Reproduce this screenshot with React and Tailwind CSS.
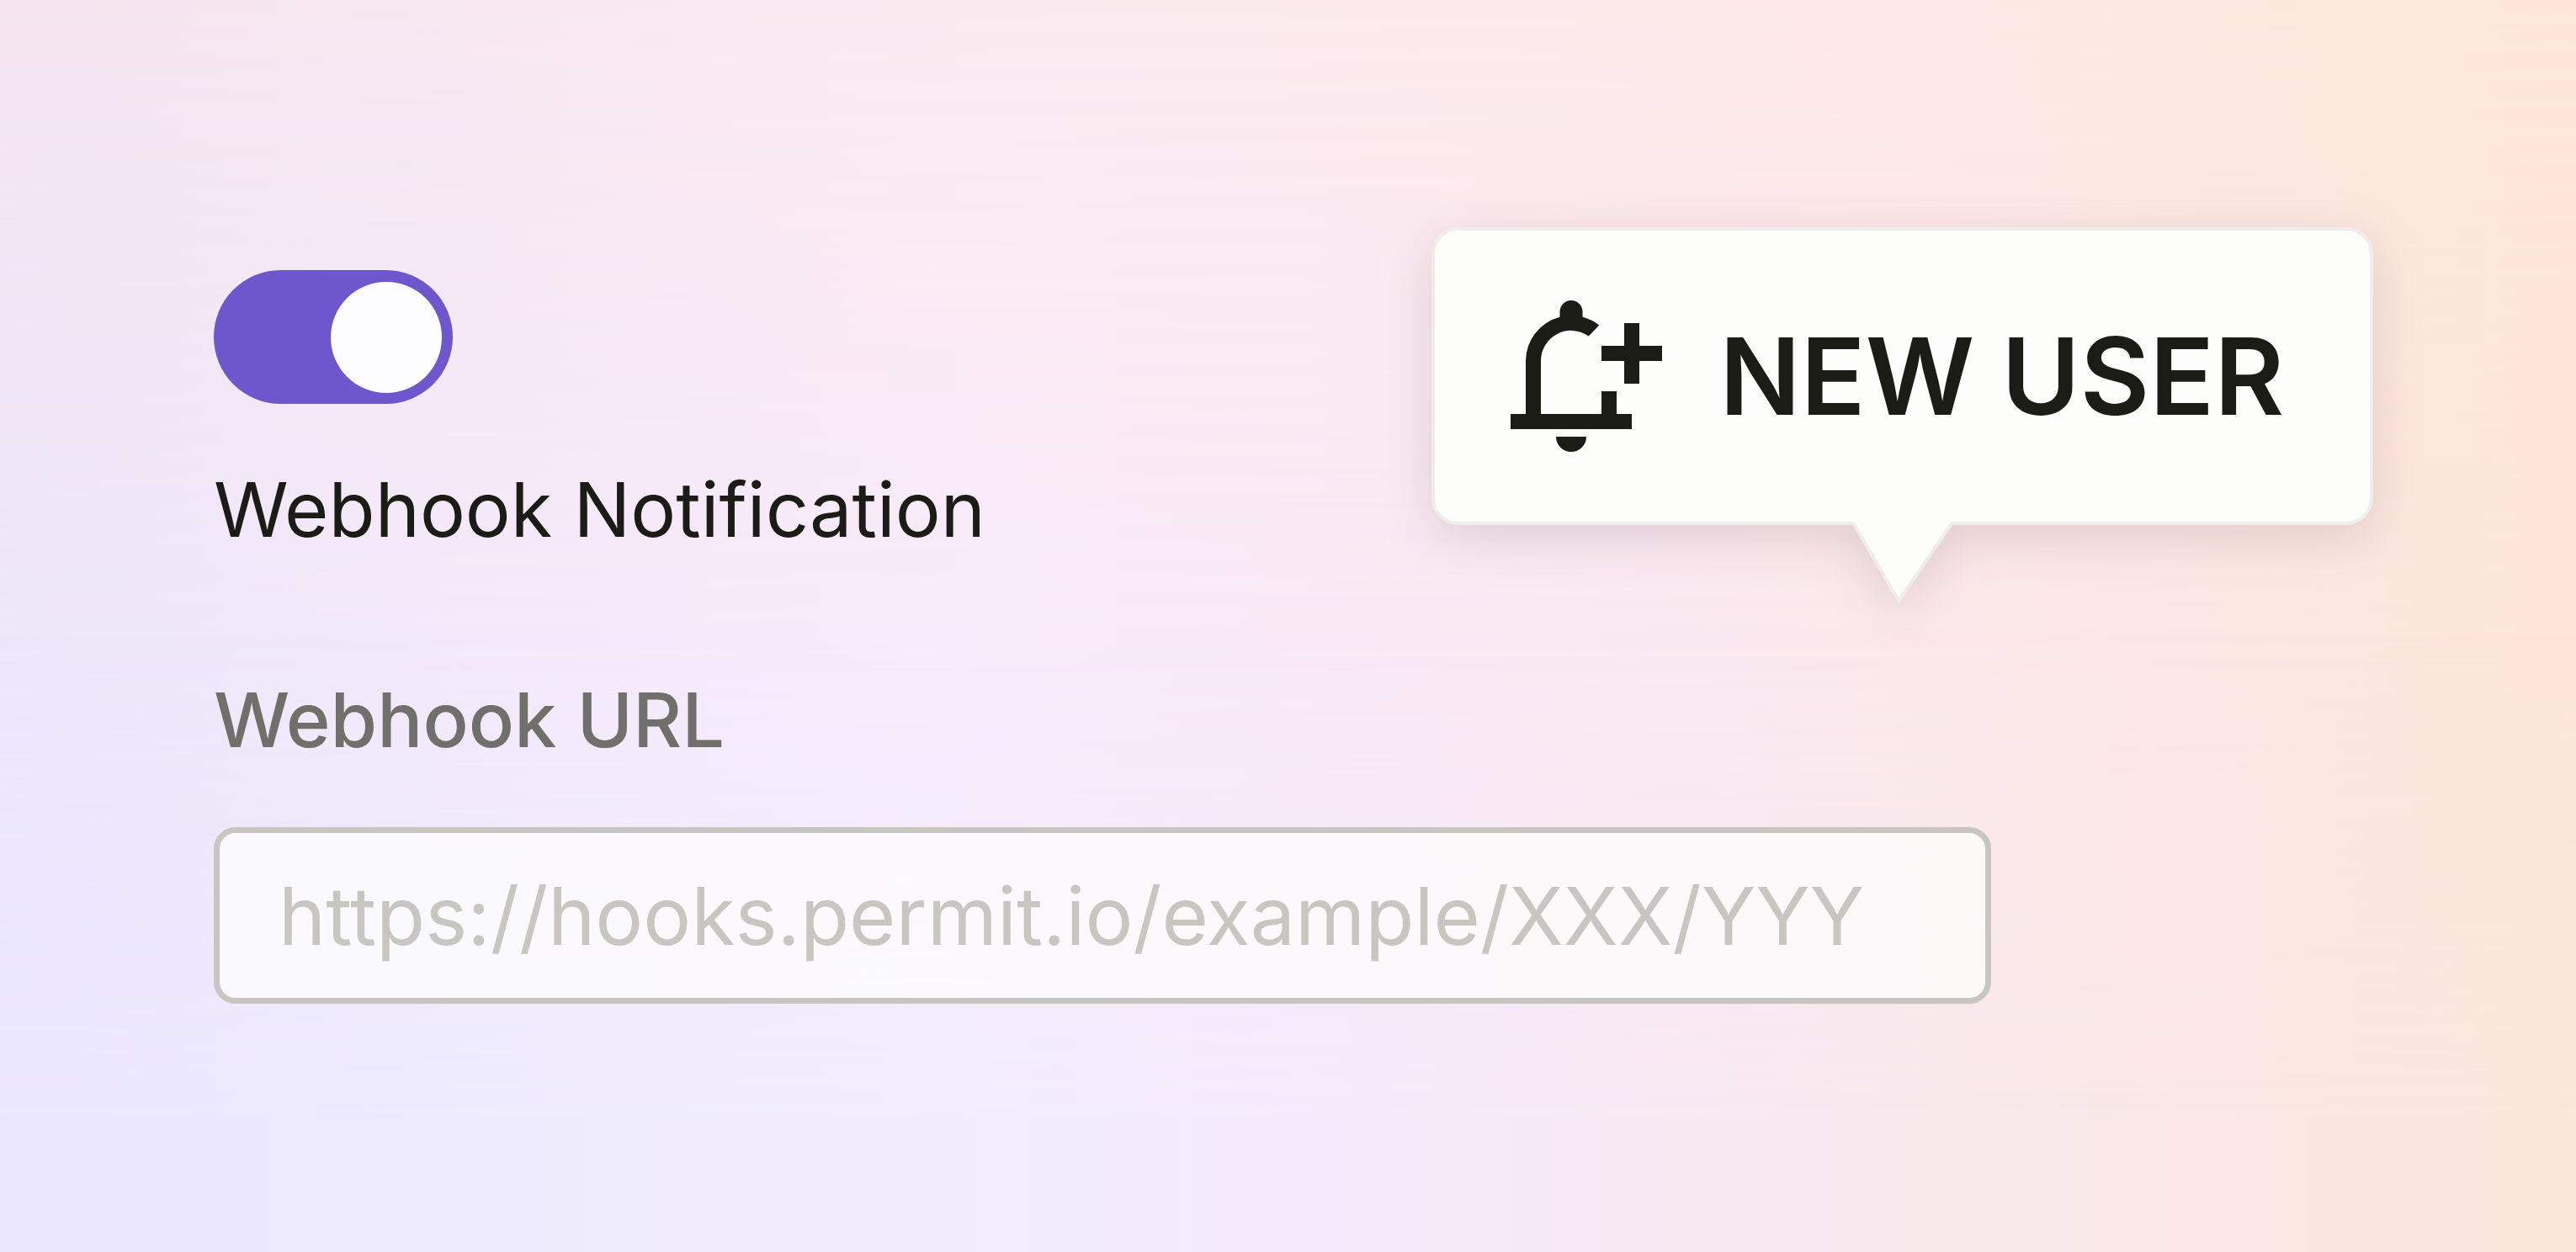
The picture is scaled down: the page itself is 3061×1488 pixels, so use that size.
function Backdrop() {
  return (
    <div aria-hidden="true" className="absolute inset-0 -z-10 bg-[linear-gradient(90deg,#ede7fb_0%,#f4eafb_18%,#f8ecfc_36%,#f9eaf7_52%,#fbe9ee_72%,#fce8e5_86%,#fde7dc_95%,#fee7d9_100%)]">
      <div className="absolute inset-0 bg-[linear-gradient(90deg,#f4e5f0_0%,#f6e8f1_16%,#fbeaf0_36%,#fceaee_52%,#fde9e7_74%,#fee8df_86%,#fee7d9_100%)] [mask-image:linear-gradient(180deg,black_0%,transparent_55%)]" />
      <div className="absolute inset-0 bg-[linear-gradient(90deg,#eae6fd_0%,#eeebfe_18%,#f1edfe_34%,#f6eafb_53%,#f7e9f2_66%,#fae8e8_82%,#fbe7df_93%,#fce6db_100%)] [mask-image:linear-gradient(180deg,transparent_50%,black_90%)]" />
    </div>
  );
}

function AddAlertIcon() {
  return (
    <svg viewBox="0 0 20 20" className="size-[180px] shrink-0" fill="#1c1c17" aria-hidden="true">
      <path d="M0 17v-2h2V8a6 6 0 0 1 4.5-5.81V1.5a1.5 1.5 0 0 1 3 0v.69a6 6 0 0 1 2.2 1.08l-1.4 1.44A4 4 0 0 0 4 8v7h8v-3h2v3h2v2z" />
      <path d="M6 18h4a2 2 0 0 1-4 0z" />
      <path d="M15 11V8h-3V6h3V3h2v3h3v2h-3v3z" />
    </svg>
  );
}

function NewUserCallout() {
  return (
    <aside className="relative flex items-center gap-[68px] rounded-[32px] border-4 border-[#eeeeec] bg-[#fdfdfb] py-[83px] pr-[102px] pl-[90px] drop-shadow-[0_14px_30px_rgba(60,30,40,0.14)]">
      <AddAlertIcon />
      <span className="text-[127px] leading-[180px] font-semibold whitespace-nowrap text-[#1c1c17]">NEW USER</span>
      <svg viewBox="0 0 124 100" className="absolute top-full left-1/2 h-[100px] w-[124px] -translate-x-1/2" aria-hidden="true">
        <path d="M3 0H121L57 94z" fill="#fdfdfb" />
        <path d="M3 1 57 94 121 1" fill="none" stroke="#eeeeec" strokeWidth="4" />
      </svg>
    </aside>
  );
}

export default function App() {
  return (
    <main className="relative isolate min-h-screen pt-[270px] pr-[241px] pb-20 pl-[254px] font-['Inter',sans-serif]">
      <Backdrop />
      <div className="flex items-start justify-between">
        <div className="flex flex-col items-start gap-[70px] pt-[51px]">
          <input
            id="webhook-notification"
            type="checkbox"
            role="switch"
            defaultChecked
            className="flex h-[159px] w-[284px] cursor-pointer appearance-none items-center rounded-full bg-[#c7c6bf] px-[13px] before:block before:size-[132px] before:rounded-full before:bg-[#fdfdff] checked:justify-end checked:bg-[#6e56cc]"
          />
          <label htmlFor="webhook-notification" className="text-[90px] leading-[112px] font-normal whitespace-nowrap text-[#1c1c17]">
            Webhook Notification
          </label>
        </div>
        <NewUserCallout />
      </div>
      <div className="mt-[138px] flex max-w-[2112px] flex-col gap-[71px]">
        <label htmlFor="webhook-url" className="text-[90px] leading-[112px] font-medium text-[#706f6a]">
          Webhook URL
        </label>
        <input
          id="webhook-url"
          type="url"
          placeholder="https://hooks.permit.io/example/XXX/YYY"
          className="h-[210px] w-full rounded-[26px] border-7 border-[#c7c6c0] bg-[#fdfdfc]/80 px-[70px] text-[95px] font-normal text-[#1c1c17] outline-none placeholder:text-[#c7c6c0]"
        />
      </div>
    </main>
  );
}
